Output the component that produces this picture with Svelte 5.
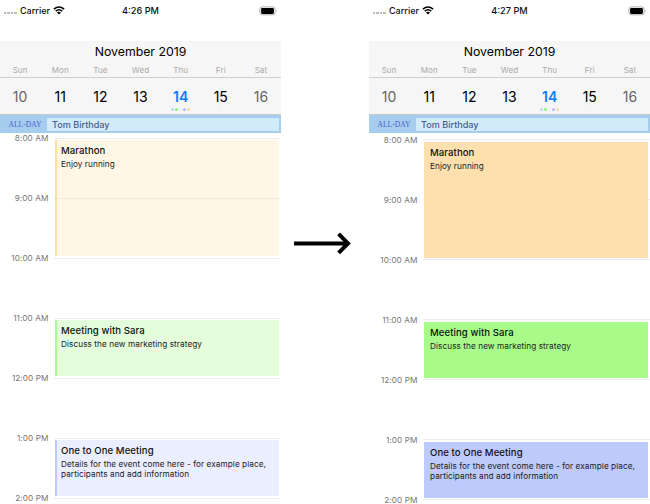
<script>
  const days = [
    ['Sun', 10], ['Mon', 11], ['Tue', 12], ['Wed', 13],
    ['Thu', 14], ['Fri', 15], ['Sat', 16]
  ];
  const hours = ['8:00 AM', '9:00 AM', '10:00 AM', '11:00 AM', '12:00 PM', '1:00 PM', '2:00 PM'];
  const events = [
    { title: 'Marathon', lines: ['Enjoy running'], kind: 'orange', rows: 'long' },
    { title: 'Meeting with Sara', lines: ['Discuss the new marketing strategy'], kind: 'green', rows: 'mid' },
    {
      title: 'One to One Meeting',
      lines: ['Details for the event come here - for example place,', 'participants and add information'],
      kind: 'blue', rows: 'late'
    }
  ];
  const phones = [
    { time: '4:26 PM', solid: false },
    { time: '4:27 PM', solid: true }
  ];
</script>

{#snippet phone(p)}
  <section class="phone" class:solid={p.solid}>
    <div class="status">
      <div class="carrier">
        <span class="signal"><i></i><i></i><i></i><i></i></span>
        <span class="name">Carrier</span>
        <svg class="wifi" width="12" height="9" viewBox="0 0 12 9">
          <path d="M0.9 3.1 Q6 -1.2 11.1 3.1 M2.7 5.1 Q6 2.3 9.3 5.1" fill="none" stroke="#000" stroke-width="1.5" />
          <path d="M4 6.5 Q6 5 8 6.5 L6 8.6 Z" fill="#000" />
        </svg>
      </div>
      <span class="clock">{p.time}</span>
      <svg class="battery" width="19" height="10" viewBox="0 0 19 10">
        <rect x="0.9" y="0.9" width="15.2" height="7.9" rx="2.3" fill="none" stroke="#a4a4a4" stroke-width="0.9" />
        <rect x="2.1" y="2.1" width="12.8" height="5.8" rx="1.1" fill="#000" />
        <path d="M17.1 3.4 Q18.3 4.8 17.1 6.3Z" fill="#999" />
      </svg>
    </div>
    <header>
      <h1>November 2019</h1>
      <div class="week names">
        {#each days as d}<span>{d[0]}</span>{/each}
      </div>
      <div class="week dates">
        {#each days as d, i}
          <div class="date" class:weekend={i === 0 || i === 6} class:today={i === 4}>
            <span>{d[1]}</span>
            <div class="dots">
              {#if i === 4}<i class="sky"></i><i class="lime"></i><i class="pale"></i><i class="indigo"></i><i class="sand"></i>{/if}
              {#if i === 5}<i class="rose"></i>{/if}
            </div>
          </div>
        {/each}
      </div>
    </header>
    <div class="allday">
      <span class="label">ALL-DAY</span>
      <div class="birthday"><span>Tom Birthday</span></div>
    </div>
    <div class="timeline">
      {#each hours as h, i}
        <span class="hour" style:grid-row={i + 1}>{h}</span>
        <div class="line" style:grid-row={i + 1}></div>
      {/each}
      {#each events as e}
        <article class="{e.kind} {e.rows}">
          <h2>{e.title}</h2>
          {#each e.lines as l}<p>{l}</p>{/each}
        </article>
      {/each}
    </div>
  </section>
{/snippet}

<main>
  {@render phone(phones[0])}
  <div class="between">
    <svg width="58" height="26" viewBox="0 0 58 26">
      <path d="M0 13.4H54" stroke="#000" stroke-width="4" />
      <path d="M44.6 3.9L54 13.4L44.6 22.9" fill="none" stroke="#000" stroke-width="4" />
    </svg>
  </div>
  {@render phone(phones[1])}
</main>

<style>
  :global(body) { background: #fff; overflow: hidden; }
  main {
    width: 650px; height: 504px; overflow: hidden; display: flex;
    font-family: Inter, "Liberation Sans", sans-serif; color: #111; background: #fff;
  }
  .phone { width: 281px; height: 504px; overflow: hidden; display: flex; flex-direction: column; flex: none; }
  .between { width: 88px; display: flex; align-items: flex-start; padding: 230px 0 0 13px; box-sizing: border-box; flex: none; }
  svg { display: block; flex: none; }

  .status { height: 41px; flex: none; display: grid; grid-template-columns: 1fr auto 1fr; align-items: start; }
  .carrier { display: flex; padding-left: 4px; height: 21px; align-items: center; font-size: 9px; font-weight: 500; }
  .signal { display: flex; gap: 1.3px; padding-top: 5px; width: 16px; }
  .signal i { width: 2.2px; height: 2px; background: #bbb; }
  .name { width: 33.5px; }
  .wifi { margin-left: -0.5px; }
  .clock { font-size: 9.2px; font-weight: 500; line-height: 21px; }
  .battery { justify-self: end; margin: 5.5px 3.5px 0 0; }

  header { height: 74px; flex: none; background: #f6f6f6; border-bottom: 1px solid #c9c9c9; box-sizing: border-box; display: flex; flex-direction: column; }
  h1 { margin: 0; font-size: 12.3px; font-weight: 400; line-height: 21px; text-align: center; color: #000; height: 21px; }
  .week { display: grid; grid-template-columns: repeat(7, 1fr); text-align: center; }
  .names { height: 16px; box-sizing: border-box; border-bottom: 1px solid #cfcfcf; font-size: 8px; letter-spacing: .1px; line-height: 17px; color: #a9a9a9; }
  .date { font-size: 14px; line-height: 20px; padding-top: 9px; color: #000; }
  .date span { display: block; height: 20px; }
  .weekend { color: #666; }
  .today { color: #087eff; font-weight: 600; }
  .dots { display: flex; justify-content: center; gap: 1px; height: 3px; margin-top: 1px; }
  .dots i { width: 3px; height: 3px; border-radius: 50%; }
  .sky { background: #b7d8f5; }
  .lime { background: #91ef7e; }
  .pale { background: #f3f1f8; }
  .indigo { background: #b0bcfa; }
  .sand { background: #f9d7a0; }
  .rose { background: #f9eef0; }

  .allday { height: 18px; flex: none; background: #a6cdee; display: flex; box-sizing: border-box; padding: 3px 2px 2px 0; }
  .label { width: 47px; padding-left: 8.5px; box-sizing: border-box; font: 7.6px/14px "Liberation Serif", serif; color: #4660d2; }
  .birthday { flex: 1; background: #d2ebf9; padding-left: 5px; font-size: 9.1px; font-weight: 500; line-height: 14px; color: #485c91; }

  .timeline { display: grid; grid-template-columns: 54px 1fr; grid-template-rows: repeat(7, 60px); padding-top: 5px; flex: none; }
  .solid .timeline { padding-top: 6px; }
  .hour { grid-column: 1; text-align: right; padding-right: 5.6px; font-size: 8.2px; letter-spacing: .07px; line-height: 14px; margin-top: -7px; height: 14px; color: #757575; white-space: nowrap; }
  .solid .hour { margin-top: -6px; }
  .line { grid-column: 2; border-top: 1px solid #ececec; }
  article { grid-column: 2; margin: 2px 2px 2px 1px; padding: 4px 0 0 4px; border-left: 2px solid; overflow: hidden; white-space: nowrap; }
  .solid article { margin: 3px 2px 1px 1px; }
  .long { grid-row: 1 / 3; }
  .mid { grid-row: 4; }
  .late { grid-row: 6; }
  h2 { margin: 0; font-size: 9.6px; letter-spacing: .06px; font-weight: 500; line-height: 14px; color: #111; }
  p { margin: 0; padding-top: 1px; font-size: 8.2px; letter-spacing: .08px; line-height: 10px; color: #222; }
  p + p { padding-top: 0; }
  .orange { background: rgba(255, 224, 171, .3); border-color: #fedea4; }
  .green { background: #e4fddb; border-color: #a8fb88; }
  .blue { background: #ebeefe; border-color: #bdcafc; }
  .solid .orange { background: #fde0ad; border-color: #fde0ad; }
  .solid .green { background: #a8fb88; }
  .solid .blue { background: #bdcafc; }
</style>
